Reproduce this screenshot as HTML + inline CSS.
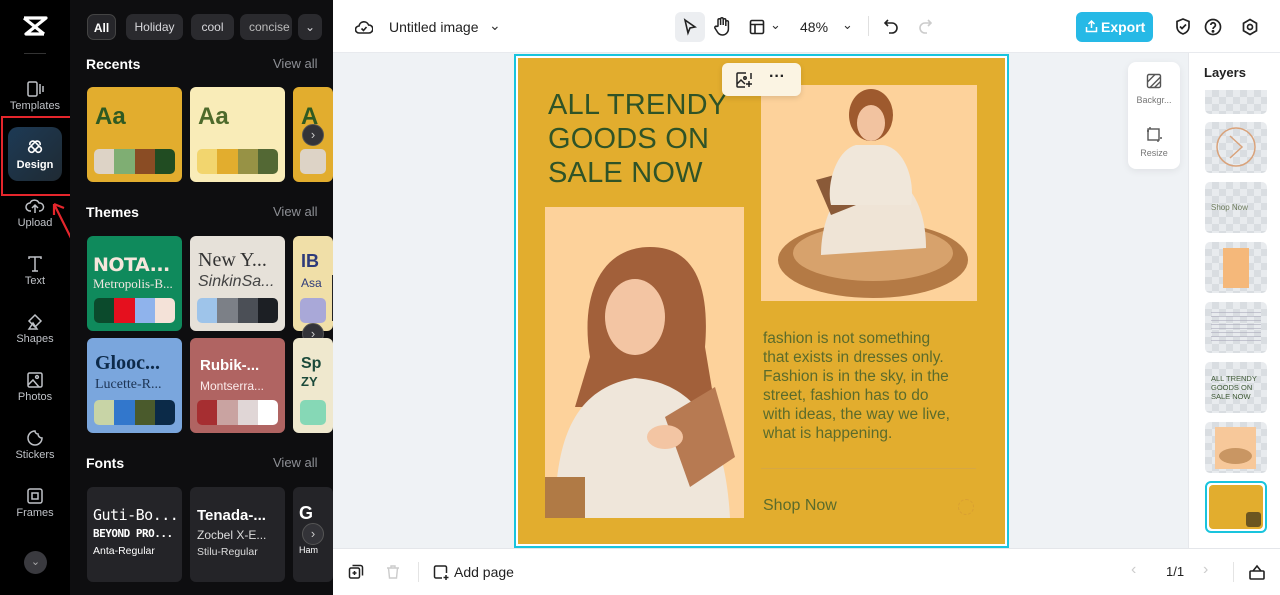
<!DOCTYPE html>
<html><head><meta charset="utf-8">
<style>
*{margin:0;padding:0;box-sizing:border-box}
body{width:1280px;height:595px;overflow:hidden;font-family:"Liberation Sans",sans-serif;background:#fff;position:relative}
.abs{position:absolute}
.rail{left:0;top:0;width:70px;height:595px;background:#000}
.ri{position:absolute;left:0;width:70px;text-align:center;color:#bfc2c7;font-size:11px}
.ri svg{display:block;margin:0 auto 2px}
.panel{left:70px;top:0;width:263px;height:595px;background:#0e0e10;overflow:hidden}
.chip{position:absolute;top:14px;height:26px;border-radius:7px;background:#2a2a2e;color:#d8d8dc;font-size:12px;line-height:26px;text-align:center}
.h{position:absolute;left:16px;color:#fff;font-weight:bold;font-size:14px}
.va{position:absolute;left:203px;color:#8d8f95;font-size:13px}
.card{position:absolute;width:95px;height:95px;border-radius:6px;overflow:hidden;white-space:nowrap}
.pal{position:absolute;left:7px;right:7px;bottom:8px;height:25px;border-radius:5px;overflow:hidden;display:flex}
.pal i{flex:1}
.nav{position:absolute;width:22px;height:22px;border-radius:50%;background:#333338;border:1px solid #555;color:#ccc;font-size:13px;line-height:19px;text-align:center}
.top{left:333px;top:0;width:947px;height:53px;background:#fff;border-bottom:1px solid #e8eaee}
.cv{left:333px;top:53px;width:855px;height:495px;background:#eff2f5}
.bot{left:333px;top:548px;width:947px;height:47px;background:#fff;border-top:1px solid #e4e6ea}
.layers{left:1188px;top:53px;width:92px;height:495px;background:#fff;border-left:1px solid #e6e8ec}
.th{position:absolute;left:16px;width:62px;height:51px;border-radius:5px;background-color:#e8ebee;background-image:linear-gradient(45deg,#d9dde1 25%,transparent 25%,transparent 75%,#d9dde1 75%),linear-gradient(45deg,#d9dde1 25%,transparent 25%,transparent 75%,#d9dde1 75%);background-size:14px 14px;background-position:0 0,7px 7px;overflow:hidden}
</style></head><body>

<div class="abs rail">
  <svg class="abs" style="left:22px;top:16px" width="26" height="20" viewBox="0 0 26 20"><path d="M2 2h22L4 18h18M2 2l20 16M24 2L4 18" stroke="#fff" stroke-width="3.2" fill="none" stroke-linejoin="round"/></svg>
  <div class="abs" style="left:24px;top:53px;width:22px;height:1px;background:#333"></div>
  <div class="ri" style="top:80px"><svg width="18" height="18" viewBox="0 0 18 18" fill="none" stroke="#bfc2c7" stroke-width="1.5"><rect x="2" y="2" width="9" height="14" rx="1.5"/><path d="M14 4v10M17 6v6"/></svg>Templates</div>
  <div class="abs" style="left:8px;top:127px;width:54px;height:54px;border-radius:10px;background:linear-gradient(135deg,#1d3a55,#1f2a33)"></div>
  <div class="ri" style="top:139px;color:#fff;font-weight:bold"><svg width="18" height="18" viewBox="0 0 18 18" fill="none" stroke="#fff" stroke-width="1.6"><path d="M4 6a3 3 0 015-3l6 6a3 3 0 01-4 4L5 7"/><path d="M14 6a3 3 0 00-5-3L3 9a3 3 0 004 4l6-6"/></svg>Design</div>
  <div class="abs" style="left:1px;top:116px;width:73px;height:80px;border:2px solid #e5262c"></div>
  <div class="ri" style="top:197px"><svg width="20" height="18" viewBox="0 0 20 18" fill="none" stroke="#bfc2c7" stroke-width="1.5"><path d="M6 14H5a4 4 0 010-8 5 5 0 019 0 4 4 0 011 8h-1M10 16V8M7 11l3-3 3 3"/></svg>Upload</div>
  <svg class="abs" style="left:50px;top:198px" width="28" height="50" viewBox="0 0 28 50"><path d="M24 46L4 6M4 6l0 11M4 6l10 4" stroke="#e5262c" stroke-width="2.2" fill="none"/></svg>
  <div class="ri" style="top:255px"><svg width="18" height="18" viewBox="0 0 18 18" fill="none" stroke="#bfc2c7" stroke-width="1.5"><path d="M3 4V2h12v2M9 2v14M6 16h6"/></svg>Text</div>
  <div class="ri" style="top:313px"><svg width="18" height="18" viewBox="0 0 18 18" fill="none" stroke="#bfc2c7" stroke-width="1.5"><path d="M9 2l6 6-6 6-6-6zM3 16l4-6 4 6z"/></svg>Shapes</div>
  <div class="ri" style="top:371px"><svg width="18" height="18" viewBox="0 0 18 18" fill="none" stroke="#bfc2c7" stroke-width="1.5"><rect x="2" y="2" width="14" height="14" rx="1.5"/><circle cx="11" cy="6" r="1.4"/><path d="M2 14l5-5 6 7"/></svg>Photos</div>
  <div class="ri" style="top:429px"><svg width="18" height="18" viewBox="0 0 18 18" fill="none" stroke="#bfc2c7" stroke-width="1.5"><path d="M9 2a7 7 0 107 7 4 4 0 01-4-4 3 3 0 01-3-3z"/></svg>Stickers</div>
  <div class="ri" style="top:487px"><svg width="18" height="18" viewBox="0 0 18 18" fill="none" stroke="#bfc2c7" stroke-width="1.5"><rect x="2" y="2" width="14" height="14" rx="2"/><rect x="6" y="6" width="6" height="6"/></svg>Frames</div>
  <div class="abs" style="left:24px;top:551px;width:23px;height:23px;border-radius:50%;background:#3a3a3f;color:#aaa;font-size:11px;text-align:center;line-height:22px">⌄</div>
</div>

<div class="abs panel">
  <div class="chip" style="left:17px;width:29px;background:#26262a;border:1px solid #444;color:#fff;font-weight:bold">All</div>
  <div class="chip" style="left:56px;width:57px">Holiday</div>
  <div class="chip" style="left:121px;width:43px">cool</div>
  <div class="chip" style="left:170px;width:52px;text-align:left;padding-left:9px;overflow:hidden;color:#bbb">concise</div>
  <div class="chip" style="left:228px;width:24px">⌄</div>

  <div class="h" style="top:56px">Recents</div><div class="va" style="top:56px">View all</div>
  <div class="card" style="left:17px;top:87px;background:#e2ad2e"><div style="position:absolute;left:8px;top:16px;font-size:24px;font-weight:bold;color:#2f5a22">Aa</div><div class="pal"><i style="background:#ddd3c6"></i><i style="background:#7fae73"></i><i style="background:#8a4c24"></i><i style="background:#214c22"></i></div></div>
  <div class="card" style="left:120px;top:87px;background:#f9ecb8"><div style="position:absolute;left:8px;top:16px;font-size:24px;font-weight:bold;color:#4e6a2b">Aa</div><div class="pal"><i style="background:#f2d56e"></i><i style="background:#e2ad2e"></i><i style="background:#979245"></i><i style="background:#536834"></i></div></div>
  <div class="card" style="left:223px;top:87px;width:40px;background:#e2ad2e"><div style="position:absolute;left:8px;top:16px;font-size:24px;font-weight:bold;color:#2f5a22">A</div><div class="pal" style="background:#ddd3c6"></div></div>
  <div class="nav" style="left:232px;top:124px">›</div>

  <div class="h" style="top:204px">Themes</div><div class="va" style="top:204px">View all</div>
  <div class="card" style="left:17px;top:236px;background:#0f8a5c"><div style="position:absolute;left:6px;top:18px;font-size:19px;font-weight:900;color:#f6e6dc;font-family:'DejaVu Sans';letter-spacing:-0.5px">NOTA...</div><div style="position:absolute;left:6px;top:40px;font-size:13px;color:#f0e6e0;font-family:'Liberation Serif'">Metropolis-B...</div><div class="pal"><i style="background:#0b4a2c"></i><i style="background:#e5101e"></i><i style="background:#8fb3ec"></i><i style="background:#f4e2d8"></i></div></div>
  <div class="card" style="left:120px;top:236px;background:#e6e1d9"><div style="position:absolute;left:8px;top:13px;font-size:20px;color:#333;font-family:'Liberation Serif'">New Y...</div><div style="position:absolute;left:8px;top:37px;font-size:16px;color:#444;font-style:italic">SinkinSa...</div><div class="pal"><i style="background:#9ec4ea"></i><i style="background:#7c8087"></i><i style="background:#4b4f56"></i><i style="background:#1c1f24"></i></div></div>
  <div class="card" style="left:223px;top:236px;width:40px;background:#f0dfa8"><div style="position:absolute;left:8px;top:15px;font-size:18px;font-weight:bold;color:#2e3b7a">IB</div><div style="position:absolute;left:8px;top:40px;font-size:12px;color:#2e3b7a">Asa</div><div class="pal" style="background:#a9a8d8"></div></div>
  <div class="nav" style="left:232px;top:323px">›</div>
  <div class="card" style="left:17px;top:338px;background:#7aa6dd"><div style="position:absolute;left:8px;top:14px;font-size:20px;font-weight:bold;color:#0d2a4a;font-family:'Liberation Serif'">Glooc...</div><div style="position:absolute;left:8px;top:39px;font-size:14px;color:#1c3454;font-family:'Liberation Serif'">Lucette-R...</div><div class="pal"><i style="background:#c8d4a6"></i><i style="background:#3277cc"></i><i style="background:#4a5a2c"></i><i style="background:#0b2a48"></i></div></div>
  <div class="card" style="left:120px;top:338px;background:#b06462"><div style="position:absolute;left:10px;top:19px;font-size:15px;font-weight:bold;color:#fff">Rubik-...</div><div style="position:absolute;left:10px;top:41px;font-size:12px;color:#fbeaea">Montserra...</div><div class="pal"><i style="background:#a62e31"></i><i style="background:#c9a3a1"></i><i style="background:#e0d6d6"></i><i style="background:#fff"></i></div></div>
  <div class="card" style="left:223px;top:338px;width:40px;background:#efe8ce"><div style="position:absolute;left:8px;top:17px;font-size:16px;font-weight:bold;color:#1b4a3a">Sp</div><div style="position:absolute;left:8px;top:36px;font-size:13px;font-weight:bold;color:#1b4a3a">ZY</div><div class="pal" style="background:#86d8b6"></div></div>

  <div class="h" style="top:455px">Fonts</div><div class="va" style="top:455px">View all</div>
  <div class="card" style="left:17px;top:487px;background:#242428;color:#fff"><div style="position:absolute;left:6px;top:19px;font-size:15px;font-family:'DejaVu Sans Mono';letter-spacing:-0.5px">Guti-Bo...</div><div style="position:absolute;left:6px;top:40px;font-size:11px;font-weight:bold;font-family:'DejaVu Sans Mono';letter-spacing:-0.5px">BEYOND PRO...</div><div style="position:absolute;left:6px;top:58px;font-size:10.5px">Anta-Regular</div></div>
  <div class="card" style="left:120px;top:487px;background:#242428;color:#fff"><div style="position:absolute;left:7px;top:20px;font-size:15px;font-weight:bold">Tenada-...</div><div style="position:absolute;left:7px;top:41px;font-size:12px;color:#ddd">Zocbel X-E...</div><div style="position:absolute;left:7px;top:59px;font-size:10.5px;color:#ddd">Stilu-Regular</div></div>
  <div class="card" style="left:223px;top:487px;width:40px;background:#242428;color:#fff"><div style="position:absolute;left:6px;top:16px;font-size:18px;font-weight:bold">G</div><div style="position:absolute;left:6px;top:58px;font-size:9px">Ham</div></div>
  <div class="nav" style="left:232px;top:523px">›</div>
</div>
<div class="abs" style="left:332px;top:275px;width:8px;height:46px;background:#222;border-radius:0 5px 5px 0"></div>

<div class="abs top">
  <svg class="abs" style="left:22px;top:18px" width="18" height="18" viewBox="0 0 18 18" fill="none" stroke="#222" stroke-width="1.6"><path d="M5 15H4a3.5 3.5 0 010-7 5 5 0 019.6-1A4 4 0 0114 15z"/><path d="M6.5 10.5l2 2 3-3.5"/></svg>
  <div class="abs" style="left:56px;top:19px;font-size:14px;color:#222">Untitled image</div>
  <div class="abs" style="left:156px;top:17px;font-size:14px;color:#333">⌄</div>
  <div class="abs" style="left:342px;top:12px;width:30px;height:30px;border-radius:6px;background:#eceef1"></div>
  <svg class="abs" style="left:349px;top:18px" width="16" height="18" viewBox="0 0 16 18" fill="none" stroke="#222" stroke-width="1.6"><path d="M3 2l10 7-5 1-2 5z"/></svg>
  <svg class="abs" style="left:380px;top:16px" width="18" height="20" viewBox="0 0 18 20" fill="none" stroke="#222" stroke-width="1.5"><path d="M5 10V4a1.3 1.3 0 012.6 0v5V3a1.3 1.3 0 012.6 0v6V4a1.3 1.3 0 012.6 0v6V6a1.3 1.3 0 012.6 0v7a6 6 0 01-6 6 6 6 0 01-5-3l-2.5-4a1.3 1.3 0 012-1.5z"/></svg>
  <svg class="abs" style="left:416px;top:19px" width="16" height="16" viewBox="0 0 16 16" fill="none" stroke="#222" stroke-width="1.6"><rect x="1.5" y="1.5" width="13" height="13" rx="1.5"/><path d="M1.5 5.5h13M6 5.5v9"/></svg>
  <div class="abs" style="left:437px;top:17px;font-size:13px;color:#333">⌄</div>
  <div class="abs" style="left:467px;top:19px;font-size:14px;color:#222">48%</div>
  <div class="abs" style="left:509px;top:17px;font-size:13px;color:#333">⌄</div>
  <div class="abs" style="left:535px;top:16px;width:1px;height:20px;background:#e0e0e0"></div>
  <svg class="abs" style="left:550px;top:18px" width="16" height="16" viewBox="0 0 16 16" fill="none" stroke="#222" stroke-width="1.6"><path d="M5 2L2 5l3 3M2 5h7a5 5 0 010 10H6"/></svg>
  <svg class="abs" style="left:584px;top:18px" width="16" height="16" viewBox="0 0 16 16" fill="none" stroke="#ccc" stroke-width="1.6"><path d="M11 2l3 3-3 3M14 5H8a5 5 0 000 10h2"/></svg>
  <div class="abs" style="left:743px;top:12px;width:77px;height:30px;border-radius:6px;background:#26b9e6;color:#fff;font-size:14px;font-weight:bold;line-height:30px;padding-left:25px">Export</div>
  <svg class="abs" style="left:752px;top:20px" width="13" height="13" viewBox="0 0 13 13" fill="none" stroke="#fff" stroke-width="1.5"><path d="M6.5 8V1M3.5 4l3-3 3 3M1.5 7v4.5h10V7"/></svg>
  <svg class="abs" style="left:841px;top:17px" width="18" height="19" viewBox="0 0 18 19" fill="none" stroke="#222" stroke-width="1.7"><path d="M9 2l6 2.5v5c0 4-3 6.5-6 7.5-3-1-6-3.5-6-7.5v-5z"/><path d="M6 9.5l2 2 4-4"/></svg>
  <svg class="abs" style="left:871px;top:18px" width="18" height="18" viewBox="0 0 18 18" fill="none" stroke="#222" stroke-width="1.7"><circle cx="9" cy="9" r="7.5"/><path d="M6.8 7a2.3 2.3 0 114 1.6c-.9.7-1.8 1.1-1.8 2.4"/><circle cx="9" cy="13.3" r=".6" fill="#222"/></svg>
  <svg class="abs" style="left:908px;top:18px" width="18" height="18" viewBox="0 0 18 18" fill="none" stroke="#222" stroke-width="1.7"><path d="M9 1.5l6.5 3.75v7.5L9 16.5l-6.5-3.75v-7.5z"/><circle cx="9" cy="9" r="2.5"/></svg>
</div>

<div class="abs cv"></div>
<div class="abs" style="left:514px;top:54px;width:495px;height:494px;border:2px solid #19c4dd;background:#fff"></div>
<div class="abs" style="left:518px;top:58px;width:487px;height:486px;background:#e2ad2e;overflow:hidden">
  <div style="position:absolute;left:30px;top:30px;font-size:29px;line-height:34px;color:#2f5327;letter-spacing:0.2px;font-weight:300">ALL TRENDY<br>GOODS ON<br>SALE NOW</div>
  <div style="position:absolute;left:243px;top:27px;width:216px;height:216px;background:#fdd29b;overflow:hidden">
    <svg width="216" height="216" viewBox="0 0 216 216"><ellipse cx="112" cy="175" rx="95" ry="38" fill="#b47a45"/><ellipse cx="112" cy="168" rx="80" ry="28" fill="#d7a26c"/><path d="M60 170c0-40 20-80 55-82 30 0 50 30 50 75z" fill="#efe4d6"/><ellipse cx="110" cy="30" rx="22" ry="26" fill="#9e5a2e"/><ellipse cx="110" cy="38" rx="14" ry="18" fill="#f2c3a0"/><path d="M55 95l55-15 10 30-50 20z" fill="#8a5a38"/><path d="M95 60c-20 5-30 40-25 60h80c5-30-10-60-30-60z" fill="#f0e7da"/></svg>
  </div>
  <div style="position:absolute;left:27px;top:149px;width:199px;height:311px;background:#fdd29b;overflow:hidden">
    <svg width="199" height="311" viewBox="0 0 199 311"><path d="M45 150c-10-60 10-110 60-110 45 0 60 40 55 100l10 60H30z" fill="#a2603a"/><ellipse cx="90" cy="110" rx="30" ry="38" fill="#f3c5a3"/><path d="M10 311c0-80 20-130 80-140 60 5 90 50 95 140z" fill="#efe6da"/><path d="M120 210l50-30 20 70-45 30z" fill="#b77a52"/><ellipse cx="120" cy="230" rx="18" ry="12" fill="#f3c5a3"/><path d="M0 270h40v41H0z" fill="#b07a45"/></svg>
  </div>
  <div style="position:absolute;left:245px;top:271px;font-size:15.5px;line-height:19px;color:#5b6b2b">fashion is not something<br>that exists in dresses only.<br>Fashion is in the sky, in the<br>street, fashion has to do<br>with ideas, the way we live,<br>what is happening.</div>
  <div style="position:absolute;left:243px;top:410px;width:215px;height:1px;background:#d6a744"></div>
  <div style="position:absolute;left:245px;top:439px;font-size:16px;color:#5b6b2b">Shop Now</div>
  <div style="position:absolute;left:440px;top:441px;width:16px;height:16px;border-radius:50%;border:1px dashed #d9a032"></div>
</div>
<div class="abs" style="left:722px;top:63px;width:79px;height:33px;background:#fbf4e3;border-radius:6px;box-shadow:0 2px 6px rgba(0,0,0,.12)"></div>
<svg class="abs" style="left:735px;top:71px" width="18" height="18" viewBox="0 0 18 18" fill="none" stroke="#222" stroke-width="1.5"><path d="M11 2H3a1 1 0 00-1 1v12a1 1 0 001 1h7"/><path d="M2 13l4-4 4 4"/><circle cx="10" cy="7" r="1.2"/><path d="M14 10v6M11 13h6M16 2v6"/></svg>
<div class="abs" style="left:769px;top:68px;font-size:16px;font-weight:bold;color:#222">···</div>

<div class="abs" style="left:1128px;top:62px;width:52px;height:107px;background:#fff;border-radius:8px;box-shadow:0 2px 8px rgba(0,0,0,.07)"></div>
<svg class="abs" style="left:1146px;top:73px" width="16" height="16" viewBox="0 0 16 16" fill="none" stroke="#555" stroke-width="1.4"><rect x="1.5" y="1.5" width="13" height="13" rx="1.5"/><path d="M1.5 9l7.5-7.5M4 14.5L14.5 4M8.5 14.5l6-6"/></svg>
<div class="abs" style="left:1128px;top:95px;width:52px;text-align:center;font-size:9px;color:#777">Backgr...</div>
<svg class="abs" style="left:1146px;top:126px" width="16" height="16" viewBox="0 0 16 16" fill="none" stroke="#555" stroke-width="1.4"><rect x="2" y="3" width="11" height="11"/><path d="M4 1v2M14 12h2M1 5h2M12 14v2"/></svg>
<div class="abs" style="left:1128px;top:148px;width:52px;text-align:center;font-size:9px;color:#777">Resize</div>

<div class="abs layers">
  <div class="abs" style="left:15px;top:12px;font-size:13px;font-weight:bold;color:#222">Layers</div>
  <div class="th" style="top:37px;height:24px;border-radius:0 0 5px 5px"></div>
  <div class="th" style="top:69px"><svg width="62" height="51"><circle cx="31" cy="25" r="19" fill="none" stroke="#d9a27a" stroke-width="1.5"/><path d="M25 14l12 11-12 11" fill="none" stroke="#d9a27a" stroke-width="1.5"/></svg></div>
  <div class="th" style="top:129px"><div style="position:absolute;left:6px;top:21px;font-size:8px;color:#6c7a5a">Shop Now</div></div>
  <div class="th" style="top:189px"><div style="position:absolute;left:18px;top:6px;width:26px;height:40px;background:#f5b87a"></div></div>
  <div class="th" style="top:249px"><div style="position:absolute;left:6px;top:10px;width:50px;height:30px;background:repeating-linear-gradient(#aab 0 1px,transparent 1px 4px);opacity:.6"></div></div>
  <div class="th" style="top:309px"><div style="position:absolute;left:6px;top:12px;font-size:7.5px;line-height:9px;color:#3f5a35">ALL TRENDY<br>GOODS ON<br>SALE NOW</div></div>
  <div class="th" style="top:369px"><div style="position:absolute;left:10px;top:5px;width:41px;height:42px;background:#f7c89a"></div><div style="position:absolute;left:14px;top:26px;width:33px;height:16px;background:#c99663;border-radius:50%"></div></div>
  <div class="abs" style="left:16px;top:428px;width:62px;height:52px;border:2px solid #19c4dd;border-radius:6px;background:#fff;padding:2px"><div style="width:100%;height:100%;background:#e2ad2e;border-radius:4px;position:relative"><div style="position:absolute;right:2px;bottom:2px;width:15px;height:15px;background:#6b5520;border-radius:3px"></div></div></div>
</div>

<div class="abs bot">
  <svg class="abs" style="left:15px;top:15px" width="16" height="16" viewBox="0 0 16 16" fill="none" stroke="#222" stroke-width="1.5"><rect x="1.5" y="4" width="10" height="10" rx="1.5"/><path d="M4.5 1.5h8a2 2 0 012 2v8M6.5 7v4M4.5 9h4"/></svg>
  <svg class="abs" style="left:53px;top:15px" width="14" height="16" viewBox="0 0 14 16" fill="none" stroke="#ccc" stroke-width="1.4"><path d="M1 4h12M5 4V2h4v2M2.5 4l1 10h7l1-10"/></svg>
  <div class="abs" style="left:85px;top:13px;width:1px;height:20px;background:#e4e4e4"></div>
  <svg class="abs" style="left:100px;top:15px" width="17" height="17" viewBox="0 0 17 17" fill="none" stroke="#222" stroke-width="1.5"><path d="M9 14H3a1.5 1.5 0 01-1.5-1.5v-9A1.5 1.5 0 013 2h9a1.5 1.5 0 011.5 1.5V9M13 11v5M10.5 13.5h5"/></svg>
  <div class="abs" style="left:121px;top:15px;font-size:14px;color:#222">Add page</div>
  <div class="abs" style="left:798px;top:12px;font-size:16px;color:#ccc">‹</div>
  <div class="abs" style="left:833px;top:15px;font-size:13px;color:#222">1/1</div>
  <div class="abs" style="left:870px;top:12px;font-size:16px;color:#ccc">›</div>
  <div class="abs" style="left:900px;top:13px;width:1px;height:20px;background:#e4e4e4"></div>
  <svg class="abs" style="left:915px;top:14px" width="18" height="18" viewBox="0 0 18 18" fill="none" stroke="#222" stroke-width="1.6"><rect x="2" y="8" width="14" height="8" rx="1"/><path d="M5 8l4-5 4 5"/></svg>
</div>
</body></html>
